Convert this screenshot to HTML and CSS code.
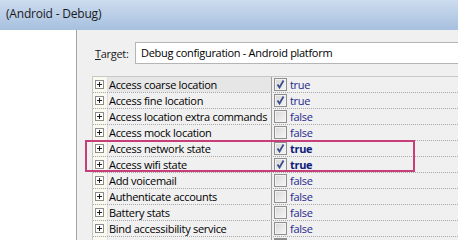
FILE: index.html
```
<!DOCTYPE html>
<html>
<head>
<meta charset="utf-8">
<link rel="stylesheet" href="styles.css">
</head>
<body>
<div class="window">
  <div class="titlebar">(Android - Debug)</div>
  <div class="body">
    <div class="sidebar"></div>
    <div class="content">
      <div class="target-row">
        <span class="label"><u>T</u>arget:</span>
        <div class="input">Debug configuration - Android platform</div>
      </div>
      <div class="grid-wrap">
        <div class="grid">
          <div class="row first"><span class="exp"><i class="plus"></i></span><span class="name">Access coarse location</span><span class="val"><i class="cb on"></i>true</span></div>
          <div class="row"><span class="exp"><i class="plus"></i></span><span class="name">Access fine location</span><span class="val"><i class="cb on"></i>true</span></div>
          <div class="row"><span class="exp"><i class="plus"></i></span><span class="name">Access location extra commands</span><span class="val"><i class="cb"></i>false</span></div>
          <div class="row"><span class="exp"><i class="plus"></i></span><span class="name">Access mock location</span><span class="val"><i class="cb"></i>false</span></div>
          <div class="row"><span class="exp"><i class="plus"></i></span><span class="name">Access network state</span><span class="val bold"><i class="cb on"></i>true</span></div>
          <div class="row"><span class="exp"><i class="plus"></i></span><span class="name">Access wifi state</span><span class="val bold"><i class="cb on"></i>true</span></div>
          <div class="row"><span class="exp"><i class="plus"></i></span><span class="name">Add voicemail</span><span class="val"><i class="cb"></i>false</span></div>
          <div class="row"><span class="exp"><i class="plus"></i></span><span class="name">Authenticate accounts</span><span class="val"><i class="cb"></i>false</span></div>
          <div class="row"><span class="exp"><i class="plus"></i></span><span class="name">Battery stats</span><span class="val"><i class="cb"></i>false</span></div>
          <div class="row"><span class="exp"><i class="plus"></i></span><span class="name">Bind accessibility service</span><span class="val"><i class="cb"></i>false</span></div>
          <div class="row"><span class="exp"><i class="plus"></i></span><span class="name"></span><span class="val"><i class="cb dark"></i></span></div>
        </div>
        <div class="highlight"></div>
      </div>
    </div>
  </div>
</div>
</body>
</html>
```
FILE: styles.css
```
* { box-sizing: border-box; }
html, body { margin: 0; padding: 0; }
body {
  width: 458px;
  height: 240px;
  overflow: hidden;
  font-family: "Open Sans", "Noto Sans", sans-serif;
  font-size: 11px;
  letter-spacing: -0.3px;
  color: #000;
  background: #f0f0f0;
}
.window { width: 458px; height: 240px; display: flex; flex-direction: column; overflow: hidden; }
.titlebar {
  height: 30px;
  flex: none;
  background: linear-gradient(#cddcef, #a6c0df);
  color: #1a1a1a;
  font-size: 12px;
  letter-spacing: -0.2px;
  padding: 6px 0 0 6px;
  line-height: 16px;
}
.body { flex: 1; display: flex; min-height: 0; overflow: hidden; }
.sidebar {
  width: 77px;
  flex: none;
  background: #fff;
  border-right: 1px solid #a3a3a3;
}
.content { flex: 1; padding: 12px 0 0 15px; min-width: 0; }
.target-row { display: flex; align-items: center; height: 22px; }
.label { width: 43px; padding-left: 3px; color: #1a1a1a; }
.input {
  flex: 1;
  height: 22px;
  background: #fff;
  border: 1px solid #b5b5b5;
  border-right: none;
  padding: 2px 0 0 5px;
  line-height: 16px;
  white-space: nowrap;
}
.grid-wrap { position: relative; margin-top: 12px; }
.grid { border-top: 1px solid #c8c8c8; border-left: 1px solid #c8c8c8; }
.row {
  display: grid;
  grid-template-columns: 15px 164px 1fr;
  height: 16px;
  line-height: 15px;
  border-bottom: 1px dotted #a8a8a8;
}
.exp {
  background: #faf9ef;
  border-right: 1px solid #dedede;
  display: flex;
  align-items: center;
  justify-content: center;
  padding-right: 1px;
}
.plus {
  width: 9px; height: 9px;
  border: 1px solid #8c8c8c;
  background: #fff linear-gradient(#1e1e1e, #1e1e1e) center / 5px 1px no-repeat;
  position: relative;
}
.plus::after {
  content: "";
  position: absolute;
  left: 3px; top: 1px;
  width: 1px; height: 5px;
  background: #1e1e1e;
}
.name {
  padding-left: 1px;
  white-space: nowrap;
  overflow: hidden;
  border-right: 1px solid #a0a0a0;
}
.first .name { background: #e6e6e6; }
.val {
  display: flex;
  align-items: center;
  padding-left: 2px;
  color: #1d2a8c;
  white-space: nowrap;
}
.val.bold { font-weight: bold; color: #101c78; }
.cb {
  width: 13px; height: 13px;
  flex: none;
  margin-right: 3px;
  border: 1px solid #8f8f8f;
  background: linear-gradient(135deg, #d7d7d7, #f7f7f7);
  box-shadow: inset 0 0 0 1px #f2f2f2;
}
.cb.dark { background: #8a8a8a; box-shadow: none; }
.cb.on {
  background: url("data:image/svg+xml;utf8,<svg xmlns='http://www.w3.org/2000/svg' width='11' height='11'><path d='M2.5 5.5 L4.5 8.5 L8.5 1.5' fill='none' stroke='%233b4f8c' stroke-width='1.8'/></svg>") center no-repeat, linear-gradient(135deg, #d7d7d7, #f7f7f7);
}
.highlight {
  position: absolute;
  left: -7px;
  top: 64px;
  width: 330px;
  height: 32px;
  border: 2px solid #c63f78;
  pointer-events: none;
}
```
